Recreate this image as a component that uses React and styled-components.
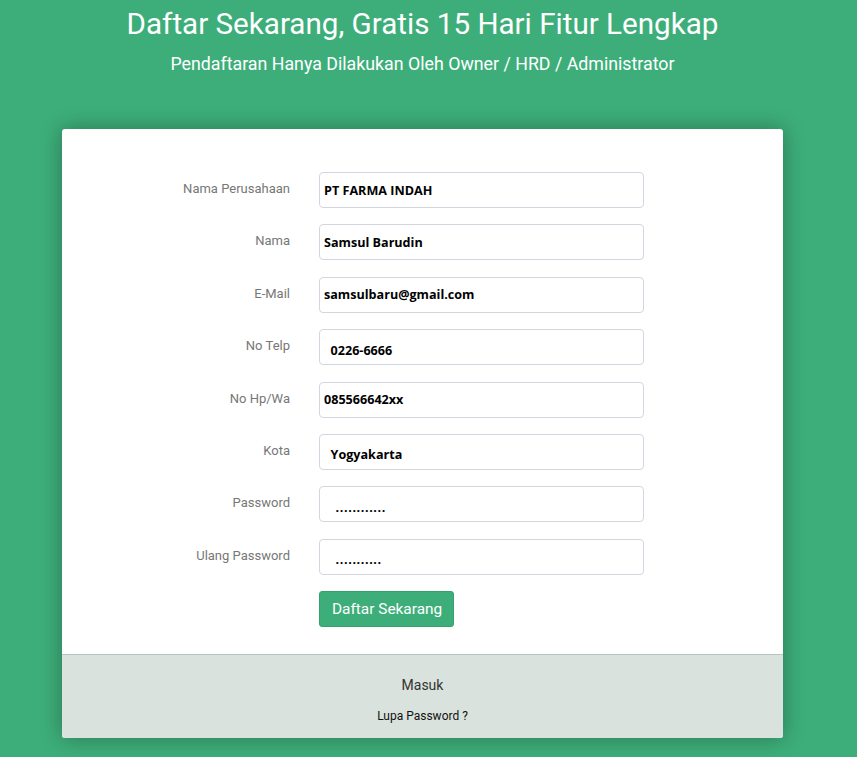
import React from 'react'
import styled, { createGlobalStyle } from 'styled-components'

const GlobalStyle = createGlobalStyle`
    html, body {
        margin: 0;
        padding: 0;
        background: #3dae7a;
        font-family: Roboto, "Liberation Sans", sans-serif;
    }
`

const Page = styled.div`
    width: calc(100% - 12px);
    min-height: 757px;
    display: flex;
    flex-direction: column;
    align-items: center;
`

const Header = styled.header`
    text-align: center;
    color: #fff;
    padding-top: 6px;
`

const Title = styled.h1`
    margin: 0;
    font-size: 29.6px;
    font-weight: 400;
    line-height: 36px;
`

const Subtitle = styled.p`
    margin: 10px 0 0;
    font-size: 17.8px;
    line-height: 24px;
`

const Card = styled.div`
    width: 721px;
    margin-top: 53px;
    background: #fff;
    border-radius: 3px;
    box-shadow: 0 0 22px rgba(0, 0, 0, 0.32);
    overflow: hidden;
`

const Form = styled.form`
    padding: 43px 0 27px;
    display: flex;
    flex-direction: column;
    gap: 16.4px;
`

const Row = styled.div`
    display: grid;
    grid-template-columns: 228px 325px;
    column-gap: 29px;
    align-items: start;
`

const Label = styled.label`
    text-align: right;
    font-size: 13px;
    color: #777;
    padding-top: 9px;
    line-height: 16px;
`

const Input = styled.input`
    box-sizing: border-box;
    width: 325px;
    height: 36px;
    border: 1px solid #d2d6de;
    border-radius: 4px;
    padding: ${p => (p.$low ? '6px 4px 0' : '0 4px')};
    font-family: "Open Sans", "Liberation Sans", sans-serif;
    font-weight: 700;
    font-size: 12.6px;
    letter-spacing: ${p => (p.$dots ? '0.6px' : '0')};
    color: #000;
    background: #fff;
    outline: none;
`

const Button = styled.button`
    grid-column: 2;
    justify-self: start;
    background: #3dae7a;
    border: 1px solid #37a06f;
    border-radius: 3px;
    color: #fff;
    font-family: Roboto, "Liberation Sans", sans-serif;
    font-size: 15.4px;
    height: 36px;
    padding: 0 11px 0 12px;
    cursor: pointer;
`

const Footer = styled.div`
    background: #d9e2dc;
    border-top: 1px solid #b3c8bb;
    height: 83px;
    display: flex;
    flex-direction: column;
    align-items: center;
`

const FooterLink = styled.a`
    color: ${p => (p.$small ? '#111' : '#333')};
    font-size: ${p => (p.$small ? '12px' : '14px')};
    text-decoration: none;
    margin-top: ${p => (p.$small ? '13px' : '21px')};
    line-height: 18px;
`

const fields = [
    ['Nama Perusahaan', 'PT FARMA INDAH'],
    ['Nama', 'Samsul Barudin'],
    ['E-Mail', 'samsulbaru@gmail.com'],
    ['No Telp', '  0226-6666', 'low'],
    ['No Hp/Wa', '085566642xx'],
    ['Kota', '  Yogyakarta', 'low'],
    ['Password', '   ............', 'dots'],
    ['Ulang Password', '   ...........', 'dots'],
]

function App() {
    return (
        <React.Fragment>
            <GlobalStyle />
            <Page>
                <Header>
                    <Title>Daftar Sekarang, Gratis 15 Hari Fitur Lengkap</Title>
                    <Subtitle>Pendaftaran Hanya Dilakukan Oleh Owner / HRD / Administrator</Subtitle>
                </Header>
                <Card>
                    <Form onSubmit={e => e.preventDefault()}>
                        {fields.map(([label, value, kind]) => (
                            <Row key={label}>
                                <Label>{label}</Label>
                                <Input
                                    defaultValue={value.replace(/ /g, '\u00a0')}
                                    $low={!!kind}
                                    $dots={kind === 'dots'}
                                    readOnly
                                />
                            </Row>
                        ))}
                        <Row>
                            <Button type="submit">Daftar Sekarang</Button>
                        </Row>
                    </Form>
                    <Footer>
                        <FooterLink href="#">Masuk</FooterLink>
                        <FooterLink href="#" $small>Lupa Password ?</FooterLink>
                    </Footer>
                </Card>
            </Page>
        </React.Fragment>
    )
}

export default App
